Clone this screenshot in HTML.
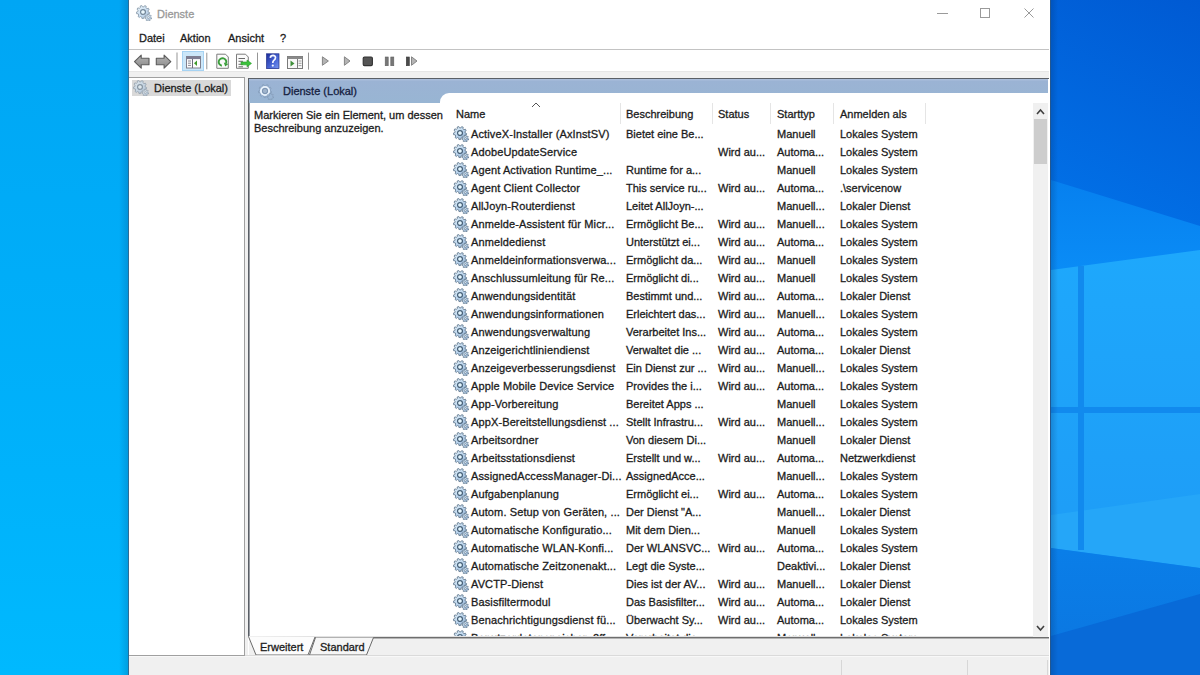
<!DOCTYPE html>
<html><head><meta charset="utf-8">
<style>
html,body{margin:0;padding:0}
body{width:1200px;height:675px;overflow:hidden;position:relative;background:#0a64d4;font-family:"Liberation Sans",sans-serif;font-size:11px;color:#1c1c1c}
.a{position:absolute}
.t{position:absolute;white-space:nowrap;font-size:11px;line-height:13px;-webkit-text-stroke:0.3px currentColor}
.ri{position:absolute;left:453px}
#deskL{left:0;top:0;width:128px;height:675px;background:linear-gradient(to bottom,#00a6f4 0%,#00b2fb 70%,#00b9fe 100%)}
#deskR{left:1051px;top:0;width:149px;height:675px}
#win{left:128px;top:0;width:921px;height:675px;background:#fff;border-left:1px solid #2f6c94;border-right:1px solid #24578f}
.sep{position:absolute;width:1px;background:#cfcfcf}
.hsep{position:absolute;width:1px;background:#e5e5e5;top:103px;height:21px}
</style></head><body>
<svg width="0" height="0" style="position:absolute">
<symbol id="gear" viewBox="0 0 16 16">
  <defs>
    <linearGradient id="gg" x1="0" y1="0" x2="1" y2="1">
      <stop offset="0" stop-color="#e8f4fb"/><stop offset="0.5" stop-color="#bcd6ee"/><stop offset="1" stop-color="#88a8cc"/>
    </linearGradient>
  </defs>
  <path d="M12.20,7.00 L13.58,7.55 L13.23,9.17 L11.75,9.12 L10.98,10.34 L11.68,11.65 L10.38,12.67 L9.28,11.67 L7.90,12.12 L7.60,13.57 L5.94,13.52 L5.74,12.05 L4.40,11.50 L3.23,12.42 L2.00,11.31 L2.79,10.06 L2.11,8.78 L0.63,8.73 L0.40,7.09 L1.81,6.64 L2.11,5.22 L1.01,4.23 L1.89,2.83 L3.26,3.39 L4.40,2.50 L4.19,1.03 L5.76,0.52 L6.46,1.83 L7.90,1.88 L8.69,0.62 L10.22,1.24 L9.91,2.69 L10.98,3.66 L12.39,3.20 L13.17,4.66 L12.00,5.57Z" fill="url(#gg)" stroke="#62788e" stroke-width="0.85"/>
  <circle cx="7" cy="7" r="2.4" fill="none" stroke="#4a6278" stroke-width="1.3"/>
  <circle cx="7" cy="7" r="1.6" fill="#e6f6fb"/>
  <path d="M14.80,12.60 L15.68,12.97 L15.39,14.02 L14.45,13.88 L13.86,14.55 L14.12,15.47 L13.12,15.90 L12.64,15.08 L11.74,15.04 L11.19,15.81 L10.23,15.30 L10.57,14.41 L10.05,13.68 L9.10,13.74 L8.90,12.66 L9.81,12.38 L10.05,11.52 L9.41,10.80 L10.13,9.98 L10.92,10.51 L11.74,10.16 L11.90,9.22 L13.00,9.27 L13.07,10.22 L13.86,10.65 L14.69,10.19 L15.34,11.07 L14.64,11.72Z" fill="url(#gg)" stroke="#62788e" stroke-width="0.75"/>
  <circle cx="12.3" cy="12.6" r="1" fill="#eef8fc" stroke="#566c82" stroke-width="0.6"/>
</symbol>
<symbol id="gearw" viewBox="0 0 16 16">
  <path d="M12.20,7.00 L13.58,7.55 L13.23,9.17 L11.75,9.12 L10.98,10.34 L11.68,11.65 L10.38,12.67 L9.28,11.67 L7.90,12.12 L7.60,13.57 L5.94,13.52 L5.74,12.05 L4.40,11.50 L3.23,12.42 L2.00,11.31 L2.79,10.06 L2.11,8.78 L0.63,8.73 L0.40,7.09 L1.81,6.64 L2.11,5.22 L1.01,4.23 L1.89,2.83 L3.26,3.39 L4.40,2.50 L4.19,1.03 L5.76,0.52 L6.46,1.83 L7.90,1.88 L8.69,0.62 L10.22,1.24 L9.91,2.69 L10.98,3.66 L12.39,3.20 L13.17,4.66 L12.00,5.57Z" fill="none" stroke="#7f97b4" stroke-width="0.8" opacity="0.75"/>
  <circle cx="7" cy="7" r="4.1" fill="none" stroke="#eaf3fc" stroke-width="1.9"/>
  <circle cx="7" cy="7" r="2.6" fill="#a0b4cc" stroke="#7890ab" stroke-width="0.9"/>
  <path d="M14.80,12.60 L15.68,12.97 L15.39,14.02 L14.45,13.88 L13.86,14.55 L14.12,15.47 L13.12,15.90 L12.64,15.08 L11.74,15.04 L11.19,15.81 L10.23,15.30 L10.57,14.41 L10.05,13.68 L9.10,13.74 L8.90,12.66 L9.81,12.38 L10.05,11.52 L9.41,10.80 L10.13,9.98 L10.92,10.51 L11.74,10.16 L11.90,9.22 L13.00,9.27 L13.07,10.22 L13.86,10.65 L14.69,10.19 L15.34,11.07 L14.64,11.72Z" fill="none" stroke="#7f97b4" stroke-width="0.8" opacity="0.75"/>
</symbol>
</svg>

<div id="deskL" class="a"></div>
<svg id="deskR" class="a" viewBox="1051 0 149 675" width="149" height="675">
  <defs>
    <linearGradient id="wtop" gradientUnits="userSpaceOnUse" x1="1200" y1="0" x2="1080" y2="260"><stop offset="0" stop-color="#005ad3"/><stop offset="1" stop-color="#0274ea"/></linearGradient>
    <linearGradient id="wbeam" gradientUnits="userSpaceOnUse" x1="0" y1="180" x2="0" y2="270"><stop offset="0" stop-color="#0680ef"/><stop offset="1" stop-color="#0a8cf6"/></linearGradient>
    <linearGradient id="wlogo" gradientUnits="userSpaceOnUse" x1="0" y1="250" x2="0" y2="560"><stop offset="0" stop-color="#1ea8fc"/><stop offset="1" stop-color="#1e9cf6"/></linearGradient>
    <linearGradient id="wlow" gradientUnits="userSpaceOnUse" x1="0" y1="550" x2="0" y2="640"><stop offset="0" stop-color="#0a7ee8"/><stop offset="1" stop-color="#0b78e2"/></linearGradient>
  </defs>
  <rect x="1051" y="0" width="149" height="675" fill="url(#wtop)"/>
  <polygon points="1051,180 1200,226 1200,675 1051,675" fill="url(#wbeam)"/>
  <polygon points="1051,270 1200,250 1200,568 1051,548" fill="url(#wlogo)"/>
  <polygon points="1051,515 1200,494 1200,568 1051,548" fill="#25a6f8"/>
  <polygon points="1051,548 1200,568 1200,675 1051,675" fill="url(#wlow)"/>
  <polygon points="1051,636 1200,594 1200,675 1051,675" fill="#086ad8"/>
  <rect x="1078" y="266" width="6" height="284" fill="#118aee"/>
  <rect x="1051" y="407" width="149" height="6" fill="#118aee"/>
  <defs><linearGradient id="shR" x1="0" y1="0" x2="1" y2="0"><stop offset="0" stop-color="#002a60" stop-opacity="0.22"/><stop offset="1" stop-color="#002a60" stop-opacity="0"/></linearGradient></defs>
  <rect x="1051" y="0" width="7" height="675" fill="url(#shR)"/>
</svg>
<div class="a" style="left:119px;top:0;width:9px;height:675px;background:linear-gradient(to right,rgba(0,40,90,0),rgba(0,40,90,0.18))"></div>

<div id="win" class="a">
</div>

<!-- title bar -->
<svg class="a" style="left:136px;top:5px;opacity:0.75" width="16" height="16"><use href="#gear"/></svg>
<div class="t" style="left:157px;top:8px;color:#999">Dienste</div>
<div class="a" style="left:937px;top:13px;width:11px;height:1px;background:#9a9a9a"></div>
<div class="a" style="left:980px;top:8px;width:8px;height:8px;border:1px solid #9a9a9a"></div>
<svg class="a" style="left:1023px;top:7px" width="12" height="12"><path d="M1.5,1.5 L10.5,10.5 M10.5,1.5 L1.5,10.5" stroke="#9a9a9a" stroke-width="1"/></svg>

<!-- menu -->
<div class="t" style="left:139px;top:32px">Datei</div>
<div class="t" style="left:180px;top:32px">Aktion</div>
<div class="t" style="left:228px;top:32px">Ansicht</div>
<div class="t" style="left:280px;top:32px">?</div>
<div class="a" style="left:129px;top:49px;width:920px;height:1px;background:#c3c3c3"></div>

<!-- toolbar -->
<svg class="a" style="left:129px;top:50px" width="300" height="21" viewBox="129 50 300 21">
  <defs>
    <linearGradient id="arr" x1="0" y1="0" x2="0" y2="1"><stop offset="0" stop-color="#b4b4b4"/><stop offset="1" stop-color="#8a8a8a"/></linearGradient>
    <linearGradient id="hlp" x1="0" y1="0" x2="1" y2="1"><stop offset="0" stop-color="#1c2d9a"/><stop offset="0.6" stop-color="#4a68d8"/><stop offset="1" stop-color="#7a98f0"/></linearGradient>
  </defs>
  <!-- back -->
  <path d="M134.5,61.7 L141.2,55.2 L141.2,58.3 L149,58.3 L149,64.8 L141.2,64.8 L141.2,68.2 Z" fill="url(#arr)" stroke="#5c5c5c" stroke-width="1.1" stroke-linejoin="round"/>
  <!-- forward -->
  <path d="M170.8,61.7 L164.1,55.2 L164.1,58.3 L156.3,58.3 L156.3,64.8 L164.1,64.8 L164.1,68.2 Z" fill="url(#arr)" stroke="#5c5c5c" stroke-width="1.1" stroke-linejoin="round"/>
  <rect x="176.5" y="52.5" width="1" height="17" fill="#959595"/>
  <!-- selected button -->
  <rect x="182.5" y="51.5" width="21" height="19" fill="#cce7f9" stroke="#a6d3f3" stroke-width="1"/>
  <rect x="186.5" y="56.5" width="14" height="11.5" fill="#fdfdfd" stroke="#80808e" stroke-width="1"/>
  <rect x="186.5" y="56.5" width="14" height="2.6" fill="#7d7d92"/>
  <line x1="192.5" y1="59" x2="192.5" y2="68" stroke="#6d6d7d" stroke-width="1"/>
  <line x1="188" y1="61" x2="191" y2="61" stroke="#7a7a8a" stroke-width="0.9"/>
  <line x1="188" y1="63.2" x2="191" y2="63.2" stroke="#7a7a8a" stroke-width="0.9"/>
  <line x1="188" y1="65.4" x2="191" y2="65.4" stroke="#7a7a8a" stroke-width="0.9"/>
  <path d="M197,60.5 L194,63.2 L197,66 Z" fill="#3f9a2a"/>
  <rect x="206.3" y="52.7" width="1" height="16.6" fill="#959595"/>
  <!-- refresh -->
  <path d="M216.8,54.2 L225.5,54.2 L228.3,57 L228.3,68.3 L216.8,68.3 Z" fill="#fbfbfb" stroke="#7c7c7c" stroke-width="1"/>
  <path d="M221.84,65.74 A3.8,3.8 0 1 1 226.07,63.3" fill="none" stroke="#3a9e3a" stroke-width="1.9"/>
  <path d="M228.3,64.1 L223.8,62.5 L225.2,66.4 Z" fill="#3a9e3a"/>
  <!-- export -->
  <path d="M236.5,54.2 L245.5,54.2 L248.3,57 L248.3,68.3 L236.5,68.3 Z" fill="#fbfbfb" stroke="#7c7c7c" stroke-width="1"/>
  <line x1="238.5" y1="58.5" x2="245" y2="58.5" stroke="#6a6a6a" stroke-width="1"/>
  <line x1="238.5" y1="61.3" x2="243" y2="61.3" stroke="#6a6a6a" stroke-width="1"/>
  <line x1="238.5" y1="64.3" x2="243" y2="64.3" stroke="#6a6a6a" stroke-width="1"/>
  <line x1="238.5" y1="66.8" x2="243" y2="66.8" stroke="#6a6a6a" stroke-width="1"/>
  <path d="M241,62 L247,62 L247,60 L251.5,63.4 L247,66.8 L247,64.8 L241,64.8 Z" fill="#3cc23c" stroke="#2a9a2a" stroke-width="0.6"/>
  <rect x="257" y="52.6" width="1" height="17" fill="#959595"/>
  <!-- help -->
  <rect x="266.6" y="53.8" width="12.4" height="14.8" fill="url(#hlp)" stroke="#1a2888" stroke-width="0.7"/>
  <path d="M270.3,57.8 Q270.6,55.4 273,55.4 Q275.6,55.5 275.5,57.8 Q275.4,59.4 273.6,60.6 Q272.8,61.3 272.8,63" fill="none" stroke="#f4f6ff" stroke-width="1.7"/>
  <circle cx="272.8" cy="65.6" r="1.1" fill="#f4f6ff"/>
  <!-- panel -->
  <rect x="287.5" y="56.5" width="15" height="12" fill="#f8f8f8" stroke="#7a7a7a" stroke-width="1"/>
  <rect x="287.5" y="56.5" width="15" height="2.5" fill="#8a8a8a"/>
  <line x1="297.5" y1="59" x2="297.5" y2="68.5" stroke="#7a7a7a" stroke-width="1"/>
  <path d="M290.5,60.5 L294.5,63.4 L290.5,66.5 Z" fill="#3f8f3a"/>
  <line x1="298.5" y1="61" x2="301.5" y2="61" stroke="#888" stroke-width="0.8"/>
  <line x1="298.5" y1="63.3" x2="301.5" y2="63.3" stroke="#888" stroke-width="0.8"/>
  <line x1="298.5" y1="65.6" x2="301.5" y2="65.6" stroke="#888" stroke-width="0.8"/>
  <rect x="308" y="52.6" width="1" height="17" fill="#959595"/>
  <!-- play -->
  <path d="M322.4,56.8 L328.4,61 L322.4,65.3 Z" fill="#b4b4b4" stroke="#858585" stroke-width="1" stroke-linejoin="round"/>
  <path d="M344.4,56.8 L350,61 L344.4,65.3 Z" fill="#b4b4b4" stroke="#858585" stroke-width="1" stroke-linejoin="round"/>
  <rect x="363.2" y="57" width="9.2" height="8.6" rx="1.3" fill="#555" stroke="#333" stroke-width="1.1"/>
  <rect x="385.2" y="57" width="3" height="8.7" fill="#777" stroke="#606060" stroke-width="0.6"/>
  <rect x="390.8" y="57" width="3" height="8.7" fill="#777" stroke="#606060" stroke-width="0.6"/>
  <rect x="406.3" y="57" width="3" height="8.7" fill="#4a4a4a" stroke="#3a3a3a" stroke-width="0.6"/>
  <path d="M411.5,56.8 L417,61 L411.5,65.3 Z" fill="#b4b4b4" stroke="#858585" stroke-width="1" stroke-linejoin="round"/>
</svg>
<div class="a" style="left:129px;top:71px;width:920px;height:1px;background:#e6e6e6"></div>
<div class="a" style="left:129px;top:72px;width:920px;height:6px;background:#f0f0f0"></div>

<!-- left pane -->
<div class="a" style="left:129px;top:77px;width:115px;height:578px;background:#fff;border-top:1px solid #a0a0a0;border-right:1px solid #a0a0a0;border-bottom:1px solid #a0a0a0"></div>
<div class="a" style="left:132px;top:80px;width:99px;height:16px;background:#d9d9d9"></div>
<svg class="a" style="left:133px;top:80px;opacity:0.55" width="16" height="16"><use href="#gear"/></svg>
<div class="t" style="left:154px;top:82px">Dienste (Lokal)</div>
<div class="a" style="left:245px;top:78px;width:3px;height:578px;background:#f0f0f0"></div>

<!-- right pane -->
<div class="a" style="left:248px;top:78px;width:800px;height:557px;background:#fff;border-top:1px solid #5a5f66;border-left:1px solid #5a5f66"></div>
<div class="a" style="left:249px;top:103px;width:1px;height:533px;background:#9a9ea4"></div>
<div class="a" style="left:249px;top:79px;width:799px;height:24px;background:linear-gradient(#a9bddb 0px,#a9bddb 1px,#9bb3d4 2px,#98b5d3 100%)"></div>
<svg class="a" style="left:258px;top:83.5px" width="16" height="16"><use href="#gearw"/></svg>
<div class="t" style="left:283px;top:85px;color:#15213f">Dienste (Lokal)</div>

<!-- list -->
<div class="a" style="left:440px;top:93px;width:608px;height:544px;background:#fff;border-top-left-radius:9px"></div>
<div class="t" style="left:254px;top:109px">Markieren Sie ein Element, um dessen</div>
<div class="t" style="left:254px;top:122px">Beschreibung anzuzeigen.</div>
<div class="t" style="left:456px;top:108px">Name</div>
<svg class="a" style="left:531px;top:102px" width="10" height="6"><path d="M1,5 L5,1 L9,5" fill="none" stroke="#555" stroke-width="1"/></svg>
<div class="hsep" style="left:620px"></div>
<div class="t" style="left:626px;top:108px">Beschreibung</div>
<div class="hsep" style="left:712px"></div>
<div class="t" style="left:718px;top:108px">Status</div>
<div class="hsep" style="left:770px"></div>
<div class="t" style="left:777px;top:108px">Starttyp</div>
<div class="hsep" style="left:833px"></div>
<div class="t" style="left:840px;top:108px">Anmelden als</div>
<div class="hsep" style="left:925px"></div>

<div class="a" style="left:442px;top:125px;width:590px;height:511px;overflow:hidden">
<div class="a" style="left:-442px;top:-125px;width:1200px;height:675px">
<svg class="ri" style="top:126px" width="16" height="16"><use href="#gear"/></svg>
<div class="t" style="left:471px;top:125px;line-height:18px;letter-spacing:0.12px">ActiveX-Installer (AxInstSV)</div>
<div class="t" style="left:626px;top:125px;line-height:18px">Bietet eine Be...</div>
<div class="t" style="left:777px;top:125px;line-height:18px">Manuell</div>
<div class="t" style="left:840px;top:125px;line-height:18px">Lokales System</div>
<svg class="ri" style="top:144px" width="16" height="16"><use href="#gear"/></svg>
<div class="t" style="left:471px;top:143px;line-height:18px;letter-spacing:0.12px">AdobeUpdateService</div>
<div class="t" style="left:718px;top:143px;line-height:18px">Wird au...</div>
<div class="t" style="left:777px;top:143px;line-height:18px">Automa...</div>
<div class="t" style="left:840px;top:143px;line-height:18px">Lokales System</div>
<svg class="ri" style="top:162px" width="16" height="16"><use href="#gear"/></svg>
<div class="t" style="left:471px;top:161px;line-height:18px;letter-spacing:0.12px">Agent Activation Runtime_...</div>
<div class="t" style="left:626px;top:161px;line-height:18px">Runtime for a...</div>
<div class="t" style="left:777px;top:161px;line-height:18px">Manuell</div>
<div class="t" style="left:840px;top:161px;line-height:18px">Lokales System</div>
<svg class="ri" style="top:180px" width="16" height="16"><use href="#gear"/></svg>
<div class="t" style="left:471px;top:179px;line-height:18px;letter-spacing:0.12px">Agent Client Collector</div>
<div class="t" style="left:626px;top:179px;line-height:18px">This service ru...</div>
<div class="t" style="left:718px;top:179px;line-height:18px">Wird au...</div>
<div class="t" style="left:777px;top:179px;line-height:18px">Automa...</div>
<div class="t" style="left:840px;top:179px;line-height:18px">.\servicenow</div>
<svg class="ri" style="top:198px" width="16" height="16"><use href="#gear"/></svg>
<div class="t" style="left:471px;top:197px;line-height:18px;letter-spacing:0.12px">AllJoyn-Routerdienst</div>
<div class="t" style="left:626px;top:197px;line-height:18px">Leitet AllJoyn-...</div>
<div class="t" style="left:777px;top:197px;line-height:18px">Manuell...</div>
<div class="t" style="left:840px;top:197px;line-height:18px">Lokaler Dienst</div>
<svg class="ri" style="top:216px" width="16" height="16"><use href="#gear"/></svg>
<div class="t" style="left:471px;top:215px;line-height:18px;letter-spacing:0.12px">Anmelde-Assistent für Micr...</div>
<div class="t" style="left:626px;top:215px;line-height:18px">Ermöglicht Be...</div>
<div class="t" style="left:718px;top:215px;line-height:18px">Wird au...</div>
<div class="t" style="left:777px;top:215px;line-height:18px">Manuell...</div>
<div class="t" style="left:840px;top:215px;line-height:18px">Lokales System</div>
<svg class="ri" style="top:234px" width="16" height="16"><use href="#gear"/></svg>
<div class="t" style="left:471px;top:233px;line-height:18px;letter-spacing:0.12px">Anmeldedienst</div>
<div class="t" style="left:626px;top:233px;line-height:18px">Unterstützt ei...</div>
<div class="t" style="left:718px;top:233px;line-height:18px">Wird au...</div>
<div class="t" style="left:777px;top:233px;line-height:18px">Automa...</div>
<div class="t" style="left:840px;top:233px;line-height:18px">Lokales System</div>
<svg class="ri" style="top:252px" width="16" height="16"><use href="#gear"/></svg>
<div class="t" style="left:471px;top:251px;line-height:18px;letter-spacing:0.12px">Anmeldeinformationsverwa...</div>
<div class="t" style="left:626px;top:251px;line-height:18px">Ermöglicht da...</div>
<div class="t" style="left:718px;top:251px;line-height:18px">Wird au...</div>
<div class="t" style="left:777px;top:251px;line-height:18px">Manuell</div>
<div class="t" style="left:840px;top:251px;line-height:18px">Lokales System</div>
<svg class="ri" style="top:270px" width="16" height="16"><use href="#gear"/></svg>
<div class="t" style="left:471px;top:269px;line-height:18px;letter-spacing:0.12px">Anschlussumleitung für Re...</div>
<div class="t" style="left:626px;top:269px;line-height:18px">Ermöglicht di...</div>
<div class="t" style="left:718px;top:269px;line-height:18px">Wird au...</div>
<div class="t" style="left:777px;top:269px;line-height:18px">Manuell</div>
<div class="t" style="left:840px;top:269px;line-height:18px">Lokales System</div>
<svg class="ri" style="top:288px" width="16" height="16"><use href="#gear"/></svg>
<div class="t" style="left:471px;top:287px;line-height:18px;letter-spacing:0.12px">Anwendungsidentität</div>
<div class="t" style="left:626px;top:287px;line-height:18px">Bestimmt und...</div>
<div class="t" style="left:718px;top:287px;line-height:18px">Wird au...</div>
<div class="t" style="left:777px;top:287px;line-height:18px">Automa...</div>
<div class="t" style="left:840px;top:287px;line-height:18px">Lokaler Dienst</div>
<svg class="ri" style="top:306px" width="16" height="16"><use href="#gear"/></svg>
<div class="t" style="left:471px;top:305px;line-height:18px;letter-spacing:0.12px">Anwendungsinformationen</div>
<div class="t" style="left:626px;top:305px;line-height:18px">Erleichtert das...</div>
<div class="t" style="left:718px;top:305px;line-height:18px">Wird au...</div>
<div class="t" style="left:777px;top:305px;line-height:18px">Manuell...</div>
<div class="t" style="left:840px;top:305px;line-height:18px">Lokales System</div>
<svg class="ri" style="top:324px" width="16" height="16"><use href="#gear"/></svg>
<div class="t" style="left:471px;top:323px;line-height:18px;letter-spacing:0.12px">Anwendungsverwaltung</div>
<div class="t" style="left:626px;top:323px;line-height:18px">Verarbeitet Ins...</div>
<div class="t" style="left:718px;top:323px;line-height:18px">Wird au...</div>
<div class="t" style="left:777px;top:323px;line-height:18px">Automa...</div>
<div class="t" style="left:840px;top:323px;line-height:18px">Lokales System</div>
<svg class="ri" style="top:342px" width="16" height="16"><use href="#gear"/></svg>
<div class="t" style="left:471px;top:341px;line-height:18px;letter-spacing:0.12px">Anzeigerichtliniendienst</div>
<div class="t" style="left:626px;top:341px;line-height:18px">Verwaltet die ...</div>
<div class="t" style="left:718px;top:341px;line-height:18px">Wird au...</div>
<div class="t" style="left:777px;top:341px;line-height:18px">Automa...</div>
<div class="t" style="left:840px;top:341px;line-height:18px">Lokaler Dienst</div>
<svg class="ri" style="top:360px" width="16" height="16"><use href="#gear"/></svg>
<div class="t" style="left:471px;top:359px;line-height:18px;letter-spacing:0.12px">Anzeigeverbesserungsdienst</div>
<div class="t" style="left:626px;top:359px;line-height:18px">Ein Dienst zur ...</div>
<div class="t" style="left:718px;top:359px;line-height:18px">Wird au...</div>
<div class="t" style="left:777px;top:359px;line-height:18px">Manuell...</div>
<div class="t" style="left:840px;top:359px;line-height:18px">Lokales System</div>
<svg class="ri" style="top:378px" width="16" height="16"><use href="#gear"/></svg>
<div class="t" style="left:471px;top:377px;line-height:18px;letter-spacing:0.12px">Apple Mobile Device Service</div>
<div class="t" style="left:626px;top:377px;line-height:18px">Provides the i...</div>
<div class="t" style="left:718px;top:377px;line-height:18px">Wird au...</div>
<div class="t" style="left:777px;top:377px;line-height:18px">Automa...</div>
<div class="t" style="left:840px;top:377px;line-height:18px">Lokales System</div>
<svg class="ri" style="top:396px" width="16" height="16"><use href="#gear"/></svg>
<div class="t" style="left:471px;top:395px;line-height:18px;letter-spacing:0.12px">App-Vorbereitung</div>
<div class="t" style="left:626px;top:395px;line-height:18px">Bereitet Apps ...</div>
<div class="t" style="left:777px;top:395px;line-height:18px">Manuell</div>
<div class="t" style="left:840px;top:395px;line-height:18px">Lokales System</div>
<svg class="ri" style="top:414px" width="16" height="16"><use href="#gear"/></svg>
<div class="t" style="left:471px;top:413px;line-height:18px;letter-spacing:0.12px">AppX-Bereitstellungsdienst ...</div>
<div class="t" style="left:626px;top:413px;line-height:18px">Stellt Infrastru...</div>
<div class="t" style="left:718px;top:413px;line-height:18px">Wird au...</div>
<div class="t" style="left:777px;top:413px;line-height:18px">Manuell...</div>
<div class="t" style="left:840px;top:413px;line-height:18px">Lokales System</div>
<svg class="ri" style="top:432px" width="16" height="16"><use href="#gear"/></svg>
<div class="t" style="left:471px;top:431px;line-height:18px;letter-spacing:0.12px">Arbeitsordner</div>
<div class="t" style="left:626px;top:431px;line-height:18px">Von diesem Di...</div>
<div class="t" style="left:777px;top:431px;line-height:18px">Manuell</div>
<div class="t" style="left:840px;top:431px;line-height:18px">Lokaler Dienst</div>
<svg class="ri" style="top:450px" width="16" height="16"><use href="#gear"/></svg>
<div class="t" style="left:471px;top:449px;line-height:18px;letter-spacing:0.12px">Arbeitsstationsdienst</div>
<div class="t" style="left:626px;top:449px;line-height:18px">Erstellt und w...</div>
<div class="t" style="left:718px;top:449px;line-height:18px">Wird au...</div>
<div class="t" style="left:777px;top:449px;line-height:18px">Automa...</div>
<div class="t" style="left:840px;top:449px;line-height:18px">Netzwerkdienst</div>
<svg class="ri" style="top:468px" width="16" height="16"><use href="#gear"/></svg>
<div class="t" style="left:471px;top:467px;line-height:18px;letter-spacing:0.12px">AssignedAccessManager-Di...</div>
<div class="t" style="left:626px;top:467px;line-height:18px">AssignedAcce...</div>
<div class="t" style="left:777px;top:467px;line-height:18px">Manuell...</div>
<div class="t" style="left:840px;top:467px;line-height:18px">Lokales System</div>
<svg class="ri" style="top:486px" width="16" height="16"><use href="#gear"/></svg>
<div class="t" style="left:471px;top:485px;line-height:18px;letter-spacing:0.12px">Aufgabenplanung</div>
<div class="t" style="left:626px;top:485px;line-height:18px">Ermöglicht ei...</div>
<div class="t" style="left:718px;top:485px;line-height:18px">Wird au...</div>
<div class="t" style="left:777px;top:485px;line-height:18px">Automa...</div>
<div class="t" style="left:840px;top:485px;line-height:18px">Lokales System</div>
<svg class="ri" style="top:504px" width="16" height="16"><use href="#gear"/></svg>
<div class="t" style="left:471px;top:503px;line-height:18px;letter-spacing:0.12px">Autom. Setup von Geräten, ...</div>
<div class="t" style="left:626px;top:503px;line-height:18px">Der Dienst &quot;A...</div>
<div class="t" style="left:777px;top:503px;line-height:18px">Manuell...</div>
<div class="t" style="left:840px;top:503px;line-height:18px">Lokaler Dienst</div>
<svg class="ri" style="top:522px" width="16" height="16"><use href="#gear"/></svg>
<div class="t" style="left:471px;top:521px;line-height:18px;letter-spacing:0.12px">Automatische Konfiguratio...</div>
<div class="t" style="left:626px;top:521px;line-height:18px">Mit dem Dien...</div>
<div class="t" style="left:777px;top:521px;line-height:18px">Manuell</div>
<div class="t" style="left:840px;top:521px;line-height:18px">Lokales System</div>
<svg class="ri" style="top:540px" width="16" height="16"><use href="#gear"/></svg>
<div class="t" style="left:471px;top:539px;line-height:18px;letter-spacing:0.12px">Automatische WLAN-Konfi...</div>
<div class="t" style="left:626px;top:539px;line-height:18px">Der WLANSVC...</div>
<div class="t" style="left:718px;top:539px;line-height:18px">Wird au...</div>
<div class="t" style="left:777px;top:539px;line-height:18px">Automa...</div>
<div class="t" style="left:840px;top:539px;line-height:18px">Lokales System</div>
<svg class="ri" style="top:558px" width="16" height="16"><use href="#gear"/></svg>
<div class="t" style="left:471px;top:557px;line-height:18px;letter-spacing:0.12px">Automatische Zeitzonenakt...</div>
<div class="t" style="left:626px;top:557px;line-height:18px">Legt die Syste...</div>
<div class="t" style="left:777px;top:557px;line-height:18px">Deaktivi...</div>
<div class="t" style="left:840px;top:557px;line-height:18px">Lokaler Dienst</div>
<svg class="ri" style="top:576px" width="16" height="16"><use href="#gear"/></svg>
<div class="t" style="left:471px;top:575px;line-height:18px;letter-spacing:0.12px">AVCTP-Dienst</div>
<div class="t" style="left:626px;top:575px;line-height:18px">Dies ist der AV...</div>
<div class="t" style="left:718px;top:575px;line-height:18px">Wird au...</div>
<div class="t" style="left:777px;top:575px;line-height:18px">Manuell...</div>
<div class="t" style="left:840px;top:575px;line-height:18px">Lokaler Dienst</div>
<svg class="ri" style="top:594px" width="16" height="16"><use href="#gear"/></svg>
<div class="t" style="left:471px;top:593px;line-height:18px;letter-spacing:0.12px">Basisfiltermodul</div>
<div class="t" style="left:626px;top:593px;line-height:18px">Das Basisfilter...</div>
<div class="t" style="left:718px;top:593px;line-height:18px">Wird au...</div>
<div class="t" style="left:777px;top:593px;line-height:18px">Automa...</div>
<div class="t" style="left:840px;top:593px;line-height:18px">Lokaler Dienst</div>
<svg class="ri" style="top:612px" width="16" height="16"><use href="#gear"/></svg>
<div class="t" style="left:471px;top:611px;line-height:18px;letter-spacing:0.12px">Benachrichtigungsdienst fü...</div>
<div class="t" style="left:626px;top:611px;line-height:18px">Überwacht Sy...</div>
<div class="t" style="left:718px;top:611px;line-height:18px">Wird au...</div>
<div class="t" style="left:777px;top:611px;line-height:18px">Automa...</div>
<div class="t" style="left:840px;top:611px;line-height:18px">Lokales System</div>
<svg class="ri" style="top:630px" width="16" height="16"><use href="#gear"/></svg>
<div class="t" style="left:471px;top:629px;line-height:18px;letter-spacing:0.12px">Benutzerdatenspeicher_2ff...</div>
<div class="t" style="left:626px;top:629px;line-height:18px">Verarbeitet die ...</div>
<div class="t" style="left:777px;top:629px;line-height:18px">Manuell...</div>
<div class="t" style="left:840px;top:629px;line-height:18px">Lokales System</div>
</div>
</div>

<!-- scrollbar -->
<div class="a" style="left:1033px;top:103px;width:15px;height:534px;background:#f0f0f0"></div>
<svg class="a" style="left:1036px;top:108px" width="9" height="7"><path d="M1,6 L4.5,2 L8,6" fill="none" stroke="#404040" stroke-width="1.6"/></svg>
<div class="a" style="left:1034px;top:119px;width:13px;height:45px;background:#cdcdcd"></div>
<svg class="a" style="left:1036px;top:625px" width="9" height="7"><path d="M1,1 L4.5,5 L8,1" fill="none" stroke="#404040" stroke-width="1.6"/></svg>

<!-- bottom tabs -->
<div class="a" style="left:249px;top:636px;width:784px;height:1px;background:#e2e2e2"></div>
<div class="a" style="left:249px;top:637px;width:800px;height:18px;background:#f0f0f0"></div>
<div class="a" style="left:315px;top:637px;width:734px;height:1px;background:#6e6e6e"></div>
<div class="a" style="left:373px;top:638px;width:676px;height:1px;background:#b4b4b4"></div>
<svg class="a" style="left:244px;top:634px" width="140" height="23" viewBox="244 634 140 23">
  <path d="M248.5,636.5 L256,655 L308,655 L315,637" fill="#fcfcfc" stroke="#6a6a6a" stroke-width="1"/>
  <path d="M315.5,637.5 L309.5,655 L366.5,655 L373.5,637.5" fill="#f6f6f6" stroke="#6a6a6a" stroke-width="1"/>
  <rect x="248" y="634" width="1" height="2.5" fill="#5a5f66"/>
</svg>
<div class="t" style="left:260px;top:641px">Erweitert</div>
<div class="t" style="left:320px;top:641px">Standard</div>

<!-- status bar -->
<div class="a" style="left:129px;top:655px;width:920px;height:20px;background:#f0f0f0;border-top:1px solid #dadada"></div><div class="a" style="left:129px;top:656px;width:920px;height:1px;background:#f8f8f8"></div>
<div class="a" style="left:129px;top:655px;width:116px;height:1px;background:#a0a0a0"></div>
<div class="a" style="left:841px;top:660px;width:1px;height:15px;background:#d7d7d7"></div>
<div class="a" style="left:967px;top:660px;width:1px;height:15px;background:#d7d7d7"></div>
<div class="a" style="left:1047px;top:660px;width:1px;height:15px;background:#d7d7d7"></div>

</body></html>
